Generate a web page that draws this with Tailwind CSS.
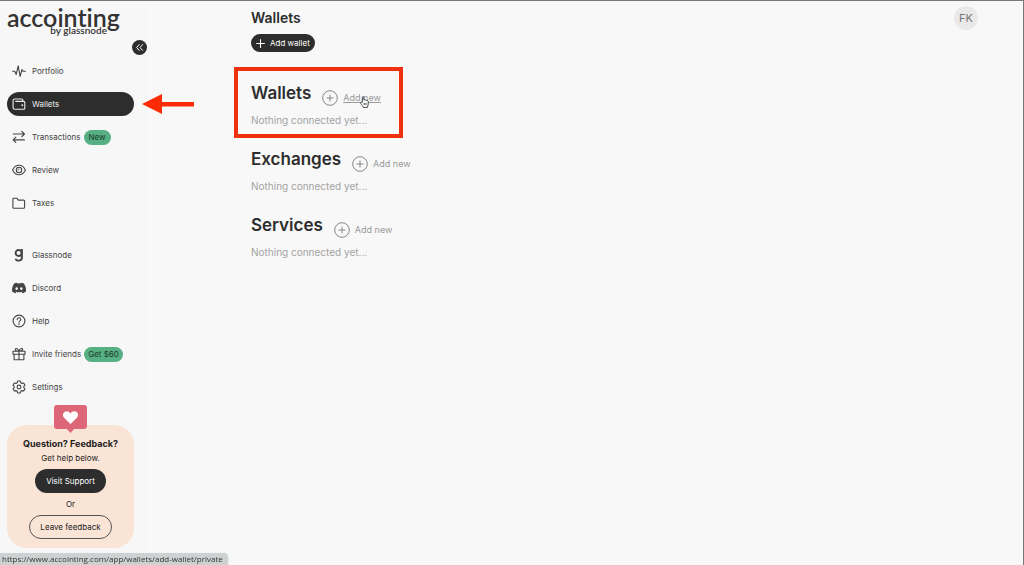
<!DOCTYPE html>
<html lang="en">
<head>
    <meta charset="utf-8"/>
    <meta content="width=device-width, initial-scale=1.0" name="viewport"/>
    <title>Wallets - Accointing</title>
    <script src="https://cdn.jsdelivr.net/npm/@tailwindcss/browser@4"></script>
</head>
<body class="bg-[#f8f8f8] text-[#2d2d2d] font-['Inter',sans-serif]">

    <div class="flex min-h-screen border-t border-r border-[#77777a]">

        <!-- Sidebar -->
        <aside class="relative w-[146px] shrink-0 bg-[#f7f7f7] border-r border-[#f5f5f5] pl-[7px] pr-[11px]">
            <a href="#" class="block pt-1 h-[58px] text-[#333] font-['Lato',sans-serif] [font-variant-ligatures:none]" aria-label="accointing by glassnode">
                <span class="block text-[25px] leading-6 font-semibold">accointing</span>
                <span class="block w-[100px] -mt-1 text-right text-[10px] leading-[10px] font-semibold">by glassnode</span>
            </a>
            <button type="button" class="absolute top-[39px] left-[132px] size-[15px] rounded-full bg-[#2d2d2d] text-white flex items-center justify-center" aria-label="Collapse sidebar">
                <svg class="size-[9px]" viewBox="0 0 10 10" fill="none" stroke="currentColor" stroke-width="1.1" stroke-linecap="round" stroke-linejoin="round"><path d="M4.6 1.8 1.8 5l2.8 3.2M8.4 1.8 5.6 5l2.8 3.2"/></svg>
            </button>

            <nav class="text-[8px] text-[#444]">
                <ul class="space-y-[9px]">
                    <li>
                        <a href="#" class="flex h-6 items-center pl-[5px]">
                            <svg class="size-[14px] mr-[6px]" viewBox="0 0 14 14" fill="none" stroke="currentColor" stroke-width="1.1" stroke-linecap="round" stroke-linejoin="round"><path d="M.6 7.2h2.1l1.5 3.2 2-8.6 1.9 10.6L10 5.6l1 1.6h2.4"/></svg>
                            Portfolio
                        </a>
                    </li>
                    <li class="relative">
                        <a href="#" class="flex h-6 items-center pl-[5px] rounded-full bg-[#2d2d2d] text-[#eee]" aria-current="page">
                            <svg class="size-[14px] mr-[6px]" viewBox="0 0 14 14" fill="none" stroke="currentColor" stroke-width="1.1" stroke-linejoin="round"><path d="M10.800 4.400V3.300a1.300 1.300 0 0 0-1.300-1.300H2.600a1.500 1.500 0 0 0-1.500 1.500v7.200a1.500 1.500 0 0 0 1.500 1.500h8.900a1.300 1.300 0 0 0 1.300-1.300V5.700a1.300 1.300 0 0 0-1.300-1.300H3.300"/><circle cx="10.300" cy="8.300" r=".4" fill="currentColor"/></svg>
                            Wallets
                        </a>
                        <svg class="absolute left-[135px] top-[2px] w-[52px] h-5 z-10" viewBox="0 0 52 20" fill="#fb2c05"><path d="M0 10 20 0v8h32v4.500H20V20z"/></svg>
                    </li>
                    <li>
                        <a href="#" class="flex h-6 items-center pl-[5px]">
                            <svg class="size-[14px] mr-[6px]" viewBox="0 0 14 14" fill="none" stroke="currentColor" stroke-width="1.2" stroke-linecap="round" stroke-linejoin="round"><path d="M1.200 4h11.200M9.800 1.400 12.400 4 9.800 6.600M12.400 9.800H1.200M3.800 7.200 1.200 9.800l2.600 2.600"/></svg>
                            Transactions
                            <span class="ml-[3px] h-[15px] px-[5px] flex items-center rounded-full bg-[#56b083] text-[#1c3a2a]">New</span>
                        </a>
                    </li>
                    <li>
                        <a href="#" class="flex h-6 items-center pl-[5px]">
                            <svg class="size-[14px] mr-[6px]" viewBox="0 0 14 14" fill="none" stroke="currentColor" stroke-width="1.1"><path d="M.6 7C2 3.800 4.300 2.200 7 2.200S12 3.800 13.400 7C12 10.200 9.700 11.800 7 11.800S2 10.200.6 7z"/><circle cx="7" cy="7" r="2.700"/><path d="M6 7.300A1.200 1.200 0 0 1 7.400 6" stroke-width=".8"/></svg>
                            Review
                        </a>
                    </li>
                    <li>
                        <a href="#" class="flex h-6 items-center pl-[5px]">
                            <svg class="size-[14px] mr-[6px]" viewBox="0 0 14 14" fill="none" stroke="currentColor" stroke-width="1.1" stroke-linejoin="round"><path d="M.9 3.200a1 1 0 0 1 1-1h2.900l1.500 1.900h5.300a1 1 0 0 1 1 1v6.100a1 1 0 0 1-1 1H1.900a1 1 0 0 1-1-1z"/></svg>
                            Taxes
                        </a>
                    </li>
                </ul>

                <ul class="mt-7 space-y-[9px]">
                    <li>
                        <a href="#" class="flex h-6 items-center pl-[5px]">
                            <svg class="size-[14px] mr-[6px]" viewBox="0 0 14 14" fill="none" stroke="currentColor" stroke-width="1.900"><circle cx="6.600" cy="5" r="3"/><path d="M9.900 1v8.800c0 1.900-1.300 2.800-3.200 2.800-1.600 0-2.800-.7-3.200-1.900"/></svg>
                            Glassnode
                        </a>
                    </li>
                    <li>
                        <a href="#" class="flex h-6 items-center pl-[5px]">
                            <svg class="size-[14px] mr-[6px]" viewBox="0 0 24 24" fill="currentColor"><path d="M20.300 4.400A19.800 19.800 0 0 0 15.400 2.900l-.6 1.300a18.300 18.300 0 0 0-5.500 0L8.600 2.900a19.700 19.700 0 0 0-4.900 1.500C.5 9-.3 13.600.1 18.100a19.900 19.900 0 0 0 6 3l1.200-2-1.900-.9.400-.3a14.200 14.200 0 0 0 12.400 0l.4.300-1.900.9 1.300 2a19.800 19.800 0 0 0 6-3c.5-5.200-.8-9.700-3.700-13.700zM8 15.300c-1.200 0-2.200-1.100-2.200-2.400s1-2.400 2.200-2.400 2.200 1.100 2.200 2.400-1 2.400-2.200 2.400zm8 0c-1.200 0-2.200-1.100-2.200-2.400s1-2.400 2.200-2.400 2.200 1.100 2.200 2.400-1 2.400-2.200 2.400z"/></svg>
                            Discord
                        </a>
                    </li>
                    <li>
                        <a href="#" class="flex h-6 items-center pl-[5px]">
                            <svg class="size-[14px] mr-[6px]" viewBox="0 0 14 14" fill="none" stroke="currentColor" stroke-width="1.1" stroke-linecap="round"><circle cx="7" cy="7" r="5.900"/><path d="M5.200 5.600c0-1.100.8-1.800 1.800-1.800s1.800.7 1.800 1.700C8.800 6.800 7 6.900 7 8.200"/><circle cx="7" cy="10.100" r=".3"/></svg>
                            Help
                        </a>
                    </li>
                    <li>
                        <a href="#" class="flex h-6 items-center pl-[5px]">
                            <svg class="size-[14px] mr-[6px]" viewBox="0 0 14 14" fill="none" stroke="currentColor" stroke-width="1.1" stroke-linejoin="round"><path d="M1 4.200h12v3H1zM2.100 7.200h9.800v5.600H2.100zM7 4.200v8.600M7 4.200C4.500 4.200 3.300 3.600 3.300 2.500S5.900.4 7 4.200zM7 4.200c2.500 0 3.700-.6 3.700-1.700S8.100.4 7 4.200z"/></svg>
                            Invite friends
                            <span class="ml-[3px] h-[15px] px-1 flex items-center rounded-full bg-[#56b083] text-[#1c3a2a]">Get $60</span>
                        </a>
                    </li>
                    <li>
                        <a href="#" class="flex h-6 items-center pl-[5px]">
                            <svg class="size-[14px] mr-[6px]" viewBox="0 0 14 14" fill="none" stroke="currentColor" stroke-width="1.1" stroke-linejoin="round"><path d="M5.700 1h2.600l.5 1.700 1.200.7 1.700-.4L13 5.200 11.800 6.400v1.200L13 8.800l-1.300 2.200-1.700-.4-1.200.7-.5 1.700H5.700l-.5-1.700-1.200-.7-1.700.4L1 8.800l1.200-1.200V6.400L1 5.200 2.300 3l1.700.4 1.200-.7z"/><circle cx="7" cy="7" r="1.900"/></svg>
                            Settings
                        </a>
                    </li>
                </ul>
            </nav>

            <!-- Feedback card -->
            <div class="relative mt-[26px] pt-3 pb-[9px] rounded-[20px] bg-[#fae4d6] flex flex-col items-center text-[8px] text-[#222]">
                <svg class="absolute -top-5 left-[47px] w-[33px] h-7" viewBox="0 0 33 28"><path d="M3 0h27a3 3 0 0 1 3 3v18a3 3 0 0 1-3 3H20l-3.500 4L13 24H3a3 3 0 0 1-3-3V3a3 3 0 0 1 3-3z" fill="#dd6677"/><path d="M16.500 19 10.300 13c-2-2-1.600-4.600.1-5.900 2-1.500 4.600-.9 6.100 1.300 1.500-2.200 4.100-2.800 6.100-1.300 1.700 1.300 2.100 3.900.1 5.900z" fill="#fff"/></svg>
                <h3 class="text-[9px] leading-[14px] font-bold">Question? Feedback?</h3>
                <p class="leading-[14px]">Get help below.</p>
                <button type="button" class="mt-1 h-6 px-[11px] rounded-full bg-[#2d2d2d] text-white">Visit Support</button>
                <p class="my-1 leading-[14px]">Or</p>
                <button type="button" class="h-6 px-[10px] rounded-full border border-[#555]">Leave feedback</button>
            </div>
        </aside>

        <!-- Content -->
        <main class="flex-1 pl-[105px] pr-[45px]">
            <header class="flex justify-between pt-[5px]">
                <div>
                    <h1 class="text-[14px] leading-6 font-semibold">Wallets</h1>
                    <button type="button" class="mt-1 h-[18px] px-[5px] flex items-center gap-[5px] rounded-full bg-[#2d2d2d] text-white text-[8px]">
                        <svg class="size-[9px]" viewBox="0 0 9 9" stroke="currentColor" stroke-width="1.1" stroke-linecap="round"><path d="M4.500.6v7.800M.6 4.500h7.800"/></svg>
                        Add wallet
                    </button>
                </div>
                <button type="button" class="size-6 rounded-full bg-[#e9e9e9] text-[#777] text-[11px]" aria-label="Account">FK</button>
            </header>

            <section class="relative mt-[30px]">
                <div class="flex items-center h-6">
                    <h2 class="text-[17px] font-semibold">Wallets</h2>
                    <a href="#" class="mt-2 ml-[11px] flex items-center gap-[5px] text-[9px] text-[#999] underline">
                        <svg class="size-4" viewBox="0 0 16 16" fill="none" stroke="#888" stroke-width="1"><circle cx="8" cy="8" r="7.300"/><path d="M8 4.500v7M4.500 8h7"/></svg>
                        Add new
                    </a>
                </div>
                <p class="mt-[6px] text-[10px] leading-4 text-[#a3a3a3]">Nothing connected yet...</p>
                <div class="absolute -top-[15px] -left-[17px] w-[169px] h-[71px] border-4 border-[#f0310f]"></div>
                <svg class="absolute left-[109px] top-[14px] w-[9px] h-3" viewBox="0 0 9 12" fill="#fff" stroke="#333" stroke-width=".9" stroke-linejoin="round"><path d="M2.300 6.500V1.400c0-1.100 1.500-1.100 1.500 0V4c.4-.5 1.300-.4 1.400.2.500-.4 1.200-.2 1.300.3.900-.3 1.700 0 1.700.9v2.800c0 1.300-.7 1.900-.8 3.200H3.200C3 10 1.700 9.400.7 7.300c-.5-1.200.6-1.700 1.600-.8z"/><path d="M4.200 7v2M5.900 7v2"/></svg>
            </section>

            <section class="mt-5">
                <div class="flex items-center h-6">
                    <h2 class="text-[17px] font-semibold">Exchanges</h2>
                    <a href="#" class="mt-2 ml-[11px] flex items-center gap-[5px] text-[9px] text-[#999]">
                        <svg class="size-4" viewBox="0 0 16 16" fill="none" stroke="#888" stroke-width="1"><circle cx="8" cy="8" r="7.300"/><path d="M8 4.500v7M4.500 8h7"/></svg>
                        Add new
                    </a>
                </div>
                <p class="mt-[6px] text-[10px] leading-4 text-[#a3a3a3]">Nothing connected yet...</p>
            </section>

            <section class="mt-5">
                <div class="flex items-center h-6">
                    <h2 class="text-[17px] font-semibold">Services</h2>
                    <a href="#" class="mt-2 ml-[11px] flex items-center gap-[5px] text-[9px] text-[#999]">
                        <svg class="size-4" viewBox="0 0 16 16" fill="none" stroke="#888" stroke-width="1"><circle cx="8" cy="8" r="7.300"/><path d="M8 4.500v7M4.500 8h7"/></svg>
                        Add new
                    </a>
                </div>
                <p class="mt-[6px] text-[10px] leading-4 text-[#a3a3a3]">Nothing connected yet...</p>
            </section>
        </main>
    </div>

    <!-- Browser link status -->
    <div class="fixed bottom-0 left-0 h-3 pl-[2px] pr-[5px] rounded-tr-sm bg-[#cdd1d2] text-[#333] text-[8px] leading-3 font-['Open_Sans',sans-serif] shadow">https://www.accointing.com/app/wallets/add-wallet/private</div>

</body>
</html>
